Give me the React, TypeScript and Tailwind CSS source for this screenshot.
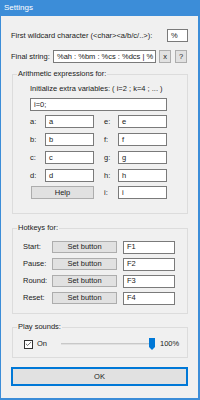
import { Check } from "lucide-react";

const FONT = "font-['Segoe_UI','Liberation_Sans',Arial,sans-serif]";

const LEFT_VARS = ["a", "b", "c", "d"];
const RIGHT_VARS = ["e", "f", "g", "h"];

const HOTKEYS = [
  { label: "Start:", key: "F1" },
  { label: "Pause:", key: "F2" },
  { label: "Round:", key: "F3" },
  { label: "Reset:", key: "F4" },
];

export default function App() {
  return (
    <div
      className={`w-[200px] h-[400px] flex flex-col bg-[#f0f0f0] border-l border-r-2 border-b-2 border-[#3c8dd8] text-[7.5px] leading-[10px] text-[#1a1a1a] whitespace-nowrap ${FONT}`}
    >
      {/* Title bar */}
      <div className="h-[16px] shrink-0 bg-[#3c8dd8] text-white text-[8px] flex items-center px-[3px]">
        Settings
      </div>

      <div className="flex flex-col px-[10px]">
        {/* Wildcard */}
        <div className="flex items-center mt-[13px] h-[13px]">
          <span>First wildcard character (&lt;char&gt;&lt;a/b/c/..&gt;):</span>
          <Box className="ml-auto w-[21px]">%</Box>
        </div>

        {/* Final string */}
        <div className="flex items-center mt-[8px] h-[13px]">
          <span className="w-[42px] shrink-0">Final string:</span>
          <Box className="w-[103px] overflow-hidden">%ah : %bm : %cs : %dcs | %</Box>
          <SmallBtn className="ml-[3px]">x</SmallBtn>
          <SmallBtn className="ml-[4px]">?</SmallBtn>
        </div>

        {/* Arithmetic expressions */}
        <Group label="Arithmetic expressions for:" className="mt-[6px] pb-[14px]">
          <div className="pl-[17px]">
            <div className="mt-[5px] h-[10px]">Initialize extra variables: ( i=2 ; k=4 ; ... )</div>
            <Box className="mt-[4px] w-[137px] h-[12px]">i=0;</Box>
            {LEFT_VARS.map((v, i) => (
              <div key={v} className={`flex items-center h-[13px] ${i === 0 ? "mt-[4px]" : "mt-[5px]"}`}>
                <span className="w-[15px]">{v}:</span>
                <Box className="w-[49px]">{v}</Box>
                <span className="ml-[10px] w-[14px]">{RIGHT_VARS[i]}:</span>
                <Box className="w-[49px]">{RIGHT_VARS[i]}</Box>
              </div>
            ))}
            <div className="flex items-center mt-[4px] h-[13px]">
              <button className="w-[63px] h-[13px] ml-[1px] bg-[#e1e1e1] border border-[#adadad] leading-[10px]">
                Help
              </button>
              <span className="ml-[10px] w-[14px]">i:</span>
              <Box className="w-[49px]">i</Box>
            </div>
          </div>
        </Group>

        {/* Hotkeys */}
        <Group label="Hotkeys for:" className="mt-[9px] pb-[9px]">
          <div className="pl-[10px]">
            {HOTKEYS.map((h, i) => (
              <div key={h.key} className={`flex items-center h-[12px] ${i === 0 ? "mt-[8px]" : "mt-[5px]"}`}>
                <span className="w-[29px]">{h.label}</span>
                <button className="w-[65px] h-[12px] bg-[#e1e1e1] border border-[#adadad] leading-[10px]">
                  Set button
                </button>
                <Box className="ml-[6px] w-[52px] h-[12px]">{h.key}</Box>
              </div>
            ))}
          </div>
        </Group>

        {/* Play sounds */}
        <Group label="Play sounds:" className="mt-[8px] pb-[7px]">
          <div className="flex items-center h-[12px] mt-[6px] pl-[11px]">
            <div className="w-[9px] h-[9px] bg-white border border-[#333] flex items-center justify-center">
              <Check size={8} strokeWidth={2.5} className="text-[#333]" />
            </div>
            <span className="ml-[4px]">On</span>
            <div className="ml-[14px] w-[88px] h-[2px] bg-[#e0e0e0] border-t border-[#c8c8c8]" />
            <svg width="6" height="12" viewBox="0 0 6 12" className="shrink-0">
              <path d="M0 0 H6 V9 L3 12 L0 9 Z" fill="#0078d7" />
            </svg>
            <span className="ml-[5px]">100%</span>
          </div>
        </Group>

        {/* OK */}
        <button className="mt-[9px] h-[19px] w-full bg-[#e1e1e1] border-2 border-[#0078d7] leading-[10px]">
          OK
        </button>
      </div>
    </div>
  );
}

function Box({ children, className = "" }: { children?: React.ReactNode; className?: string }) {
  return (
    <div className={`h-[13px] shrink-0 bg-white border border-[#7a7a7a] flex items-center px-[3px] ${className}`}>
      {children}
    </div>
  );
}

function SmallBtn({ children, className = "" }: { children: React.ReactNode; className?: string }) {
  return (
    <button className={`w-[12px] h-[13px] shrink-0 bg-[#e1e1e1] border border-[#adadad] leading-[10px] ${className}`}>
      {children}
    </button>
  );
}

function Group({ label, children, className = "" }: {
  label: string; children: React.ReactNode; className?: string;
}) {
  return (
    <fieldset className={`ml-[1px] border border-[#dcdcdc] ${className}`}>
      <legend className="ml-[4px] px-[1px] h-[10px] leading-[10px]">{label}</legend>
      {children}
    </fieldset>
  );
}
